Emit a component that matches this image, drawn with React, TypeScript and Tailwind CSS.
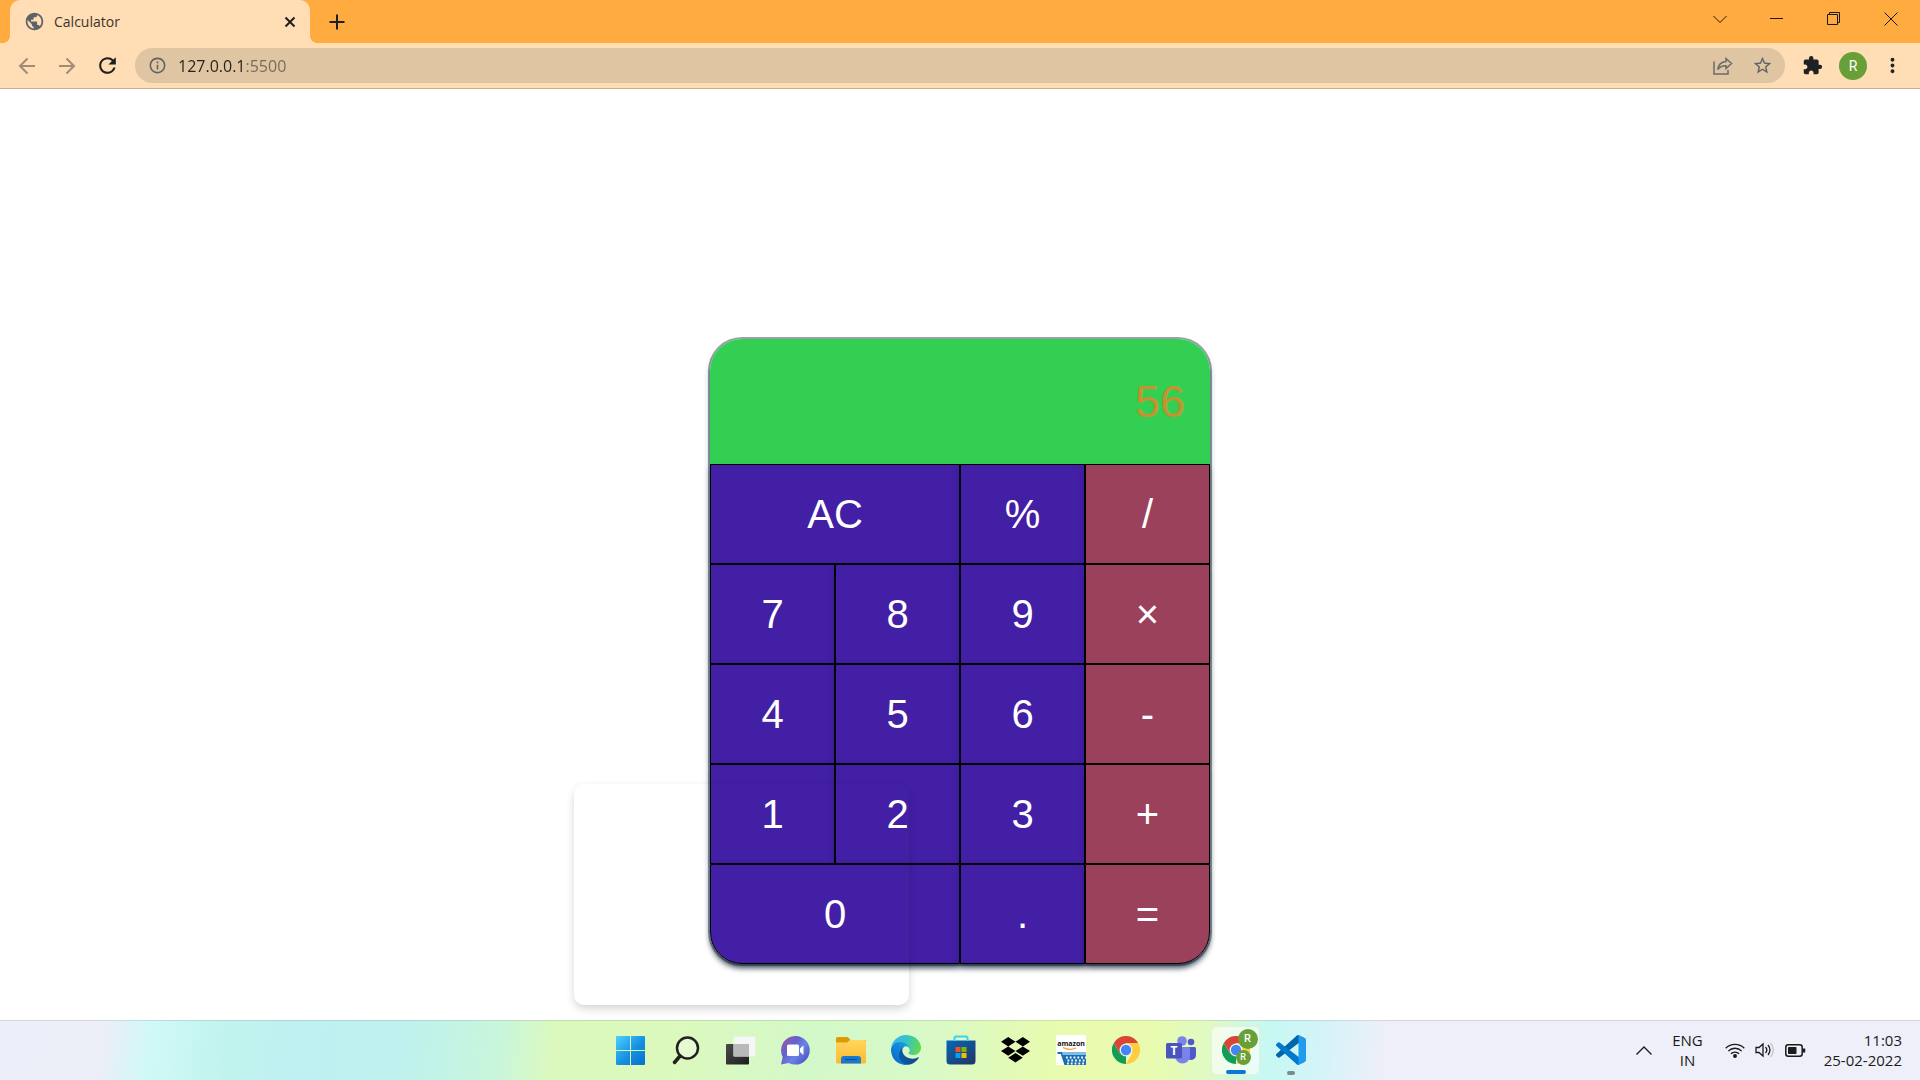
import { useState } from "react";
import type { ReactNode } from "react";
import { MdExtension, MdMoreVert, MdOutlineInfo, MdPublic, MdRefresh, MdStarBorder } from "react-icons/md";

const stroke = { fill: "none", stroke: "currentColor" } as const;

function TitleBar() {
  const control = "flex h-full w-[57px] items-center justify-center text-[#1a1a1a]";
  return (
    <header className="flex h-[43px] items-stretch bg-[#ffab40]">
      <div className="relative ml-[10px] flex w-[300px] items-center rounded-t-[10px] bg-[#ffddb5] pl-[14px] pr-[10px]">
        <span className="absolute -left-2 bottom-0 h-2 w-2 bg-[radial-gradient(circle_at_0_0,#ffab40_8px,#ffddb5_8px)]" />
        <span className="absolute -right-2 bottom-0 h-2 w-2 bg-[radial-gradient(circle_at_100%_0,#ffab40_8px,#ffddb5_8px)]" />
        <MdPublic className="size-[21px] text-[#5f6368]" />
        <span className="ml-[9px] flex-1 text-[14px] leading-5 text-[#3b342c]">Calculator</span>
        <button aria-label="Close tab" className="p-1 text-[#1f1f1f]">
          <svg width="12" height="12" viewBox="0 0 12 12" {...stroke} strokeWidth="2">
            <path d="M1.5 1.5l9 9M10.5 1.5l-9 9" />
          </svg>
        </button>
      </div>
      <button aria-label="New tab" className="ml-[18px] p-[1px] text-[#1f1f1f]">
        <svg width="16" height="16" viewBox="0 0 16 16" {...stroke} strokeWidth="2">
          <path d="M8 .5v15M.5 8h15" />
        </svg>
      </button>
      <div className="ml-auto mr-px flex h-[37px]">
        <button aria-label="Search tabs" className={control}>
          <svg width="14" height="14" viewBox="0 0 14 14" {...stroke}>
            <path d="M.5 4L7 10.5 13.500 4" />
          </svg>
        </button>
        <button aria-label="Minimize" className={control}>
          <svg width="13" height="13" viewBox="0 0 13 13" {...stroke}>
            <path d="M0 6.500h13" />
          </svg>
        </button>
        <button aria-label="Restore" className={control}>
          <svg width="13" height="13" viewBox="0 0 13 13" {...stroke}>
            <path d="M.5 2.500h10v10h-10zM2.500 2.500v-2h10v10h-2" />
          </svg>
        </button>
        <button aria-label="Close" className={control}>
          <svg width="14" height="14" viewBox="0 0 14 14" {...stroke}>
            <path d="M.5.5l13 13M13.500.5l-13 13" />
          </svg>
        </button>
      </div>
    </header>
  );
}

function Toolbar() {
  return (
    <nav className="flex h-[46px] items-center border-b border-[#c9b08f] bg-[#ffddb5] pl-[18px] pr-4">
      <button aria-label="Back" className="text-[#a08d76]">
        <svg width="18" height="18" viewBox="0 0 18 18" {...stroke} strokeWidth="2">
          <path d="M17 9H2M9.500 1.500L2 9l7.500 7.500" />
        </svg>
      </button>
      <button aria-label="Forward" className="ml-[22px] text-[#a08d76]">
        <svg width="18" height="18" viewBox="0 0 18 18" {...stroke} strokeWidth="2">
          <path d="M1 9h15M8.500 1.500L16 9l-7.500 7.500" />
        </svg>
      </button>
      <button aria-label="Reload" className="ml-[19px] text-[#1f1f1f]">
        <MdRefresh className="size-[25px]" />
      </button>
      <div className="ml-[15px] flex h-[35px] flex-1 items-center rounded-full bg-[#dfc5a2] pl-[13px] pr-[12px]">
        <button aria-label="Site information" className="text-[#5f6368]">
          <MdOutlineInfo className="size-[19px]" />
        </button>
        <input
          aria-label="Address"
          defaultValue="127.0.0.1:5500"
          className="ml-[11px] min-w-0 flex-1 bg-[linear-gradient(90deg,#25211c_68px,#75685a_68px)] bg-clip-text text-[16px] leading-6 text-transparent outline-none"
        />
        <button aria-label="Share" className="text-[#6b6b6b]">
          <svg width="20" height="18" viewBox="0 0 20 18" {...stroke} strokeWidth="1.500">
            <path d="M1 4.500V17h14v-4M13 1.500l5.500 5-5.500 5V8.800C9 8.800 6.500 10 4.800 12.500c.4-4 3-7.500 8.200-8z" />
          </svg>
        </button>
        <button aria-label="Bookmark this tab" className="ml-[19px] text-[#5f6368]">
          <MdStarBorder className="size-[21px]" />
        </button>
      </div>
      <button aria-label="Extensions" className="ml-[17px] text-[#1f2124]">
        <MdExtension className="size-[21px]" />
      </button>
      <button className="ml-4 size-7 rounded-full bg-[#689f38] font-['Roboto',sans-serif] text-[14px] leading-7 text-white">
        R
      </button>
      <button aria-label="Menu" className="ml-[14px] text-[#1f2124]">
        <MdMoreVert className="size-[23px]" />
      </button>
    </nav>
  );
}

type Key = { label: string; wide?: boolean; operator?: boolean };

const keys: Key[] = [
  { label: "AC", wide: true },
  { label: "%" },
  { label: "/", operator: true },
  { label: "7" },
  { label: "8" },
  { label: "9" },
  { label: "×", operator: true },
  { label: "4" },
  { label: "5" },
  { label: "6" },
  { label: "-", operator: true },
  { label: "1" },
  { label: "2" },
  { label: "3" },
  { label: "+", operator: true },
  { label: "0", wide: true },
  { label: "." },
  { label: "=", operator: true },
];

const corners: Record<string, string> = { "0": "rounded-bl-[32px]", "=": "rounded-br-[32px]" };

function Calculator() {
  const [value, setValue] = useState("56");
  return (
    <section className="w-[500px] rounded-[32px] font-['Liberation_Sans',Arial,sans-serif] shadow-[0_0_0_2px_rgba(6,24,44,0.4),0_4px_6px_-1px_rgba(6,24,44,0.65)]">
      <output className="flex h-[125px] items-center justify-end rounded-t-[32px] bg-[#33cf52] px-[25px] pb-px text-[45px] leading-none text-[#c8912f]">
        {value}
      </output>
      <div className="grid grid-cols-4">
        {keys.map(({ label, wide, operator }) => (
          <button
            key={label}
            onClick={() => setValue(label === "AC" ? "0" : label)}
            className={`h-[100px] border border-black text-[40px] leading-none text-white shadow-[0_4px_6px_-1px_rgba(6,24,44,0.5)] ${
              operator ? "bg-[#9b415c]" : "bg-[#421fa5]"
            } ${wide ? "col-span-2" : ""} ${corners[label] ?? ""}`}
          >
            {label}
          </button>
        ))}
      </div>
    </section>
  );
}

function StartIcon() {
  return (
    <svg width="29" height="29" viewBox="0 0 29 29">
      <defs>
        <linearGradient id="start" x1="0" y1="0" x2="29" y2="29" gradientUnits="userSpaceOnUse">
          <stop stopColor="#4fd0ff" />
          <stop offset=".55" stopColor="#1590e0" />
          <stop offset="1" stopColor="#0670cf" />
        </linearGradient>
      </defs>
      <path fill="url(#start)" d="M1 0h13v14H0V1a1 1 0 0 1 1-1zM15 0h13a1 1 0 0 1 1 1v13H15zM0 15h14v14H1a1 1 0 0 1-1-1zM15 15h14v13a1 1 0 0 1-1 1H15z" />
    </svg>
  );
}

function SearchIcon() {
  return (
    <svg width="28" height="29" viewBox="0 0 28 29" fill="none" stroke="#222" strokeLinecap="round">
      <circle cx="15.500" cy="12" r="10.500" strokeWidth="2.500" fill="#fff" fillOpacity=".3" />
      <path d="M8 20l-5.500 6.500" strokeWidth="3.500" />
    </svg>
  );
}

function TaskViewIcon() {
  return (
    <svg width="30" height="29" viewBox="0 0 30 29">
      <defs>
        <linearGradient id="tvDark" x1="0" y1="0" x2="1" y2="1">
          <stop stopColor="#4a4a4a" />
          <stop offset="1" stopColor="#1e1e1e" />
        </linearGradient>
      </defs>
      <rect y="8" width="23" height="20.500" rx="1" fill="url(#tvDark)" />
      <rect x="7.500" y="0.500" width="22" height="20" rx="1" fill="#f6f6f6" fillOpacity=".93" />
      <path d="M7.500 8H23v12.500H7.500z" fill="#b9b9b9" />
    </svg>
  );
}

function ChatIcon() {
  return (
    <svg width="29" height="29" viewBox="0 0 29 29">
      <defs>
        <linearGradient id="chat" x1="0" y1="0" x2="1" y2=".8">
          <stop stopColor="#a05aa0" />
          <stop offset=".4" stopColor="#6660cc" />
          <stop offset=".65" stopColor="#6a82e6" />
          <stop offset="1" stopColor="#4c52c4" />
        </linearGradient>
      </defs>
      <path fill="url(#chat)" d="M14.500 0a14.300 14.300 0 1 1-6.800 26.900L0 28.500l1.700-7.500A14.300 14.300 0 0 1 14.500 0z" />
      <rect x="6" y="8.500" width="12" height="11.500" rx="1.500" fill="#fff" />
      <path fill="#fff" d="M19 12.500l3.500-3v9.500L19 16z" />
    </svg>
  );
}

function ExplorerIcon() {
  return (
    <svg width="30" height="27" viewBox="0 0 30 27">
      <defs>
        <linearGradient id="folder" x1="0" y1="0" x2="0" y2="1">
          <stop stopColor="#ffd75e" />
          <stop offset="1" stopColor="#fdb92f" />
        </linearGradient>
      </defs>
      <path fill="#dd9a05" d="M1.500 0h9.500a2 2 0 0 1 1.500.7L14.500 3H30v6H0V1.500A1.500 1.500 0 0 1 1.500 0z" />
      <path fill="url(#folder)" d="M0 5.500h11l3-2.500h14.500A1.500 1.500 0 0 1 30 4.500V25a1.500 1.500 0 0 1-1.500 1.500h-27A1.500 1.500 0 0 1 0 25z" />
      <path fill="#1779cf" d="M5 26.500V22a3 3 0 0 1 3-3h14a3 3 0 0 1 3 3v4.500z" />
      <path stroke="#0b4f94" strokeWidth="1.200" d="M9 22.500h12" />
    </svg>
  );
}

function EdgeIcon() {
  return (
    <svg width="30" height="30" viewBox="0 0 256 256">
      <defs>
        <linearGradient id="edgeA" x1="60" y1="177" x2="240" y2="177" gradientUnits="userSpaceOnUse">
          <stop stopColor="#0c59a4" />
          <stop offset="1" stopColor="#114a8b" />
        </linearGradient>
        <linearGradient id="edgeB" x1="155" y1="100" x2="45" y2="220" gradientUnits="userSpaceOnUse">
          <stop stopColor="#1b9de2" />
          <stop offset=".4" stopColor="#1486d8" />
          <stop offset="1" stopColor="#0a72cc" />
        </linearGradient>
        <linearGradient id="edgeC" x1="20" y1="70" x2="245" y2="130" gradientUnits="userSpaceOnUse">
          <stop stopColor="#35b8ec" />
          <stop offset=".45" stopColor="#36c4c4" />
          <stop offset="1" stopColor="#66d84c" />
        </linearGradient>
      </defs>
      <path fill="url(#edgeA)" d="M231.070 190.540c-3.400 1.800-6.900 3.400-10.500 4.700a101.500 101.500 0 0 1-35.900 6.500c-47.300 0-88.500-32.500-88.500-74.300a31.500 31.500 0 0 1 16.400-27.300c-42.800 1.800-53.800 46.400-53.800 72.500 0 74 68.100 81.400 82.800 81.400 7.900 0 19.800-2.300 27-4.600l1.300-.4a128.300 128.300 0 0 0 66.600-52.800 4 4 0 0 0-5.400-5.700z" />
      <path fill="url(#edgeB)" d="M105.730 241.420a79.200 79.200 0 0 1-22.700-21.300 80.700 80.700 0 0 1 29.500-120c3.200-1.500 8.500-4.100 15.600-4a32.400 32.400 0 0 1 25.700 13 31.900 31.900 0 0 1 6.300 18.700c0-.2 24.500-79.600-80-79.600-43.900 0-80 41.700-80 78.200a130.200 130.200 0 0 0 12.100 56 128 128 0 0 0 156.400 67 75.500 75.500 0 0 1-62.800-8z" />
      <path fill="url(#edgeC)" d="M152.330 148.860c-.9 1-3.400 2.500-3.400 5.600 0 2.600 1.700 5.200 4.800 7.300 14.300 10 41.400 8.600 41.500 8.600a59.600 59.600 0 0 0 30.300-8.300 61.400 61.400 0 0 0 30.400-52.900c.3-22.400-8-37.300-11.300-43.900C223.530 23.900 177.730.3 128 .3a128 128 0 0 0-128 126.200c.5-36.500 36.800-66 80-66 3.500 0 23.500.3 42 10a72.600 72.600 0 0 1 30.900 29.300c6.100 10.600 7.200 24.100 7.200 29.500s-2.700 13.300-7.800 19.600z" />
    </svg>
  );
}

function StoreIcon() {
  return (
    <svg width="30" height="30" viewBox="0 0 30 30">
      <defs>
        <linearGradient id="store" x1="0" y1="0" x2=".8" y2="1">
          <stop stopColor="#0667ba" />
          <stop offset="1" stopColor="#21396b" />
        </linearGradient>
      </defs>
      <path fill="url(#store)" d="M.5 5.500h29V26a3.500 3.500 0 0 1-3.500 3.500H4A3.500 3.500 0 0 1 .5 26z" />
      <path fill="none" stroke="#35d5f7" strokeWidth="2" d="M8.500 6V3A1.500 1.500 0 0 1 10 1.500h10A1.500 1.500 0 0 1 21.500 3v3" />
      <path fill="#f25022" d="M9.500 12h5v5h-5z" />
      <path fill="#7fba00" d="M15.500 12h5v5h-5z" />
      <path fill="#00a4ef" d="M9.500 18h5v5h-5z" />
      <path fill="#ffb900" d="M15.500 18h5v5h-5z" />
    </svg>
  );
}

function DropboxIcon() {
  return (
    <svg width="29" height="26" viewBox="0 0 29 26">
      <path d="M7.200 0l7.300 4.700-7.300 4.700L0 4.700zM21.800 0L29 4.700l-7.200 4.700-7.300-4.700zM0 14.100l7.200-4.700 7.300 4.700-7.300 4.700zM21.800 9.400L29 14.100l-7.200 4.700-7.300-4.700zM7.200 20.700l7.300-4.700 7.300 4.700-7.300 4.700z" />
    </svg>
  );
}

function AmazonIcon() {
  return (
    <svg width="30" height="30" viewBox="0 0 30 30">
      <path fill="#fff" d="M0 0h30v30H0z" />
      <text x="15" y="11" textAnchor="middle" fontSize="7" fontWeight="700" fontFamily="Open Sans, sans-serif" fill="#111">
        amazon
      </text>
      <path d="M7 12.500q6.500 3.500 13 .5" fill="none" stroke="#f79a2c" strokeWidth="1.200" />
      <path d="M1.500 18h4l4 12" fill="none" stroke="#1a6fb0" strokeWidth="2" />
      <path d="M6 17.500h24V30H9.500z" fill="#1a6fb0" />
      <path fill="#7fc0e8" d="M6 17.500h24V20H6.800z" />
      <path
        d="M10 22.500h20M11.500 25.500H30M11 28.500h19"
        stroke="#fff"
        strokeWidth="1.800"
        strokeDasharray="1.800 2"
        fill="none"
      />
    </svg>
  );
}

function ChromeIcon() {
  return (
    <svg width="28" height="28" viewBox="0 0 48 48">
      <path fill="#0f9d58" d="M24 24v24A24 24 0 0 1 3.200 12l10.400 18z" />
      <path fill="#ffcd40" d="M24 24l10.400 6L24 48a24 24 0 0 0 20.800-36H24z" />
      <path fill="#db4437" d="M3.200 12L13.600 30 24 12h20.800A24 24 0 0 0 3.200 12z" />
      <circle cx="24" cy="24" r="11" fill="#f1f1f1" />
      <circle cx="24" cy="24" r="8.800" fill="#4285f4" />
    </svg>
  );
}

function ChromeProfileIcon() {
  const badge = "absolute flex items-center justify-center rounded-full bg-[#689f38] font-['Roboto',sans-serif] font-medium text-white";
  return (
    <span className="relative block">
      <ChromeIcon />
      <span className={`${badge} -right-2 -top-[7px] size-5 text-[11px]`}>R</span>
      <span className={`${badge} -bottom-px -right-px size-[15px] text-[9px]`}>R</span>
    </span>
  );
}

function TeamsIcon() {
  return (
    <svg width="30" height="28" viewBox="0 0 30 28">
      <circle cx="25" cy="6" r="3.300" fill="#5059c9" />
      <path fill="#5059c9" d="M20 11h8.500A1.500 1.500 0 0 1 30 12.500V19a5 5 0 0 1-9 3z" />
      <circle cx="16" cy="5" r="4.800" fill="#7b83eb" />
      <path fill="#7b83eb" d="M9 11h13.500a1.500 1.500 0 0 1 1.500 1.500V20a7.500 7.500 0 0 1-15 0z" />
      <rect y="7" width="16" height="15.500" rx="1.500" fill="#4b53bc" />
      <text x="8" y="19" textAnchor="middle" fontSize="12" fontWeight="700" fontFamily="Open Sans, sans-serif" fill="#fff">
        T
      </text>
    </svg>
  );
}

function CodeIcon() {
  return (
    <svg width="30" height="30" viewBox="0 0 100 100">
      <path fill="#0065a9" d="M96.500 10.800L75.900.9a6.200 6.200 0 0 0-7.100 1.200L1.300 63.600a4.200 4.200 0 0 0 0 6.200l5.500 5a4.200 4.200 0 0 0 5.300.2l81.200-61.600c2.700-2.100 6.700-.1 6.700 3.300v-.3a6.300 6.300 0 0 0-3.500-5.600z" />
      <path fill="#007acc" d="M96.500 89.200l-20.600 9.900a6.200 6.200 0 0 1-7.100-1.200L1.300 36.400a4.200 4.200 0 0 1 0-6.200l5.500-5a4.200 4.200 0 0 1 5.300-.2l81.200 61.600c2.700 2.100 6.700.1 6.700-3.300v.3a6.300 6.300 0 0 1-3.500 5.600z" />
      <path fill="#1f9cf0" d="M75.900 99.100a6.200 6.200 0 0 1-7.100-1.200c2.300 2.300 6.200.7 6.200-2.600V4.700c0-3.300-3.900-4.900-6.200-2.600a6.200 6.200 0 0 1 7.100-1.200l20.600 9.900a6.300 6.300 0 0 1 3.500 5.600v67.200a6.300 6.300 0 0 1-3.500 5.600z" />
    </svg>
  );
}

type TaskbarApp = { name: string; icon: ReactNode; state?: "active" | "open" };

const apps: TaskbarApp[] = [
  { name: "Start", icon: <StartIcon /> },
  { name: "Search", icon: <SearchIcon /> },
  { name: "Task View", icon: <TaskViewIcon /> },
  { name: "Chat", icon: <ChatIcon /> },
  { name: "File Explorer", icon: <ExplorerIcon /> },
  { name: "Edge", icon: <EdgeIcon /> },
  { name: "Store", icon: <StoreIcon /> },
  { name: "Dropbox", icon: <DropboxIcon /> },
  { name: "Amazon", icon: <AmazonIcon /> },
  { name: "Chrome", icon: <ChromeIcon /> },
  { name: "Teams", icon: <TeamsIcon /> },
  { name: "Chrome profile", icon: <ChromeProfileIcon />, state: "active" },
  { name: "Visual Studio Code", icon: <CodeIcon />, state: "open" },
];

function Taskbar() {
  return (
    <footer className="grid h-[60px] grid-cols-[1fr_auto_1fr] items-center border-t border-black/10 bg-[linear-gradient(97deg,#eceff9_0%,#eceef8_5.500%,#cff9f7_8%,#c1f3ee_12%,#bff0f2_16%,#bff1ee_21%,#c8f6dc_26%,#dcf9bd_29%,#dcf9bd_35%,#d3f8c8_42%,#d8f9c8_48%,#e8fbaf_55%,#e8fbb0_60%,#dffac4_63%,#c6f8f3_66%,#d6f3f8_69%,#eeeff9_72%,#eeeff9_100%)]">
      <div className="col-start-2 flex gap-[6px] pb-px pl-px">
        {apps.map(({ name, icon, state }) => (
          <button
            key={name}
            aria-label={name}
            className={`relative flex size-[49px] items-center justify-center rounded-md ${
              state === "active" ? "border border-black/5 bg-white/60" : ""
            }`}
          >
            {icon}
            {state === "active" && <span className="absolute bottom-0 h-1 w-5 rounded-full bg-[#0a78d4]" />}
            {state === "open" && <span className="absolute bottom-0 h-1 w-2 rounded-full bg-[#7d8a8c]" />}
          </button>
        ))}
      </div>
      <div className="flex items-center justify-end pb-px pr-[18px] text-[15px] leading-5 text-[#1b1b1b]">
        <button aria-label="Show hidden icons">
          <svg width="16" height="9" viewBox="0 0 16 9" {...stroke} strokeWidth="1.300">
            <path d="M.5 8.500L8 1l7.500 7.500" />
          </svg>
        </button>
        <button className="ml-5 text-center">
          ENG
          <br />
          IN
        </button>
        <button aria-label="Network, volume and battery" className="ml-[22px] flex items-center gap-[10px]">
          <svg width="20" height="15" viewBox="0 0 20 15" {...stroke} strokeWidth="1.300">
            <path d="M.7 5.300a13 13 0 0 1 18.600 0M3.300 8.100a9.300 9.300 0 0 1 13.400 0M5.900 10.800a5.700 5.700 0 0 1 8.200 0" />
            <circle cx="10" cy="13" r="1.300" fill="currentColor" />
          </svg>
          <svg width="20" height="16" viewBox="0 0 20 16" {...stroke} strokeWidth="1.300">
            <path d="M1 5.500h3L8 2v12l-4-3.500H1zM10.500 5a4.500 4.500 0 0 1 0 6M13 3a7.500 7.500 0 0 1 0 10" />
            <path d="M15.500 1a10.500 10.500 0 0 1 0 14" stroke="#c3c3cb" />
          </svg>
          <svg width="21" height="13" viewBox="0 0 21 13" {...stroke} strokeWidth="1.500">
            <rect x=".8" y=".8" width="16.400" height="11.400" rx="2.500" />
            <rect x="3" y="3" width="8.500" height="7" rx=".8" fill="currentColor" stroke="none" />
            <path d="M19 4.500v4" strokeWidth="2.500" />
          </svg>
        </button>
        <button className="ml-[18px] text-right">
          11:03
          <br />
          25-02-2022
        </button>
      </div>
    </footer>
  );
}

export default function App() {
  return (
    <div className="flex min-h-screen flex-col bg-white font-['Open_Sans','Noto_Sans',sans-serif]">
      <TitleBar />
      <Toolbar />
      <main className="relative flex flex-1 items-start justify-center pb-14 pt-[250px]">
        <Calculator />
        <div className="pointer-events-none absolute bottom-[15px] left-1/2 h-[221px] w-[335px] -translate-x-[386px] rounded-[10px] shadow-[0_4px_8px_rgba(0,0,0,0.16)]" />
      </main>
      <Taskbar />
    </div>
  );
}
